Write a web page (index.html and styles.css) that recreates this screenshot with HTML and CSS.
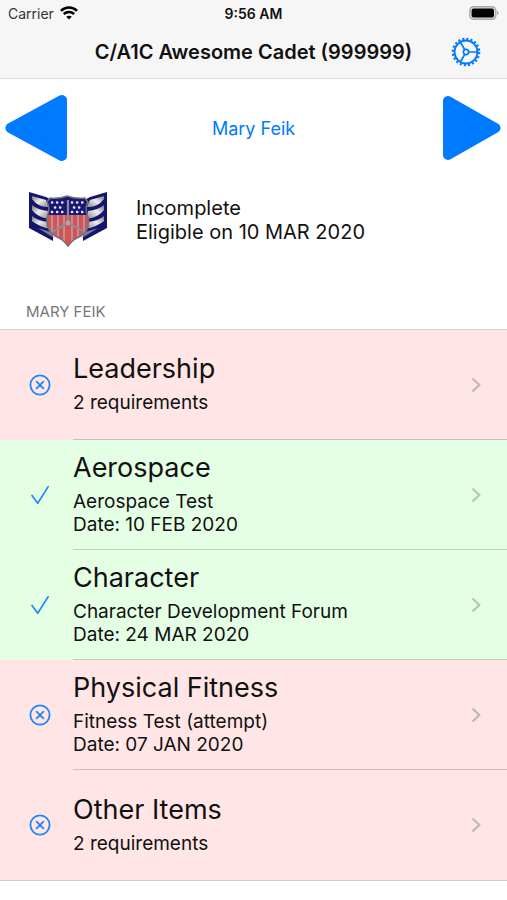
FILE: index.html
```html
<!DOCTYPE html>
<html lang="en">
<head>
<meta charset="utf-8">
<meta name="viewport" content="width=device-width, initial-scale=1">
<title>Cadet achievements</title>
<link rel="stylesheet" href="styles.css">
</head>
<body>
<svg class="defs" aria-hidden="true">
  <symbol id="cross" viewBox="0 0 22 22"><g fill="none" stroke="currentColor" stroke-width="1.8" stroke-linecap="round"><circle cx="11" cy="11" r="9.6"/><path d="M7.6 7.6l6.8 6.8M14.4 7.6l-6.8 6.8"/></g></symbol>
  <symbol id="check" viewBox="0 0 22 22"><path d="M3 11.5L8.700 19.200L19.200 2.600" fill="none" stroke="currentColor" stroke-width="1.700" stroke-linecap="round" stroke-linejoin="round"/></symbol>
  <symbol id="chevron" viewBox="0 0 10 16"><path d="M1.500 1.500L8.300 8L1.500 14.500" fill="none" stroke="currentColor" stroke-width="2.200"/></symbol>
</svg>

<header class="top">
  <div class="status">
    <div class="carrier">
      <span>Carrier</span>
      <svg class="wifi" viewBox="0 0 18 14" aria-hidden="true"><g fill="none" stroke="#000" stroke-width="2.500"><path d="M.9 4.800C5.500.300 12.500.300 17.100 4.800"/><path d="M3.800 8C6.800 5.200 11.200 5.200 14.200 8"/></g><path d="M9 13.600L6.200 10.700C7.800 9.300 10.200 9.300 11.800 10.700Z"/></svg>
    </div>
    <time class="clock">9:56 AM</time>
    <svg class="battery" viewBox="0 0 30 14" aria-hidden="true"><rect x=".8" y=".8" width="26" height="12.400" rx="3.600" fill="#ddd" stroke="#aaa" stroke-width="1.400"/><rect x="2.600" y="2.500" width="22.400" height="9" rx="2" fill="#000"/><path d="M28 5C30 5.500 30 8.500 28 9Z" fill="#aaa"/></svg>
  </div>
  <div class="nav">
    <h1 class="title">C/A1C Awesome Cadet (999999)</h1>
    <button class="settings" type="button" aria-label="Settings">
      <svg class="gear" viewBox="0 0 30 30" fill="none" stroke="currentColor" aria-hidden="true"><circle cx="15" cy="15" r="13.200" stroke-width="2.200" stroke-dasharray="2.073 2.073"/><circle cx="15" cy="15" r="11.500" stroke-width="1.900"/><circle cx="15" cy="15" r="2.600" stroke-width="1.600"/><path d="M17.600 15H26.500M13.700 12.700L9.300 5M13.700 17.300L9.300 25" stroke-width="1.700"/></svg>
    </button>
  </div>
</header>

<main>
  <nav class="pager">
    <button class="step" type="button" aria-label="Previous achievement"><svg class="triangle" viewBox="0 0 64 68" aria-hidden="true"><path d="M5.500 34L57 6V62Z" fill="currentColor" stroke="currentColor" stroke-width="10" stroke-linejoin="round"/></svg></button>
    <a class="current" href="#requirements">Mary Feik</a>
    <button class="step" type="button" aria-label="Next achievement"><svg class="triangle" viewBox="0 0 64 68" aria-hidden="true"><path d="M57.500 34L10 7V61Z" fill="currentColor" stroke="currentColor" stroke-width="10" stroke-linejoin="round"/></svg></button>
  </nav>

  <section class="summary">
    <svg class="badge" viewBox="0 0 80 58" role="img" aria-label="Mary Feik insignia">
      <defs>
        <linearGradient id="silver" x1="0" y1="0" x2="1" y2="1"><stop offset="0" stop-color="#777"/><stop offset=".45" stop-color="#eee"/><stop offset="1" stop-color="#888"/></linearGradient>
        <clipPath id="shield"><path d="M22 8Q31 9 39 6Q48 9 57 8L60 12Q57 17 59 24Q64 38 53 46Q45 49 40 57Q35 49 27 46Q16 38 20 24Q22 17 19 12Z"/></clipPath>
        <g id="wing"><path d="M1 2L18 7Q23 9 25 14V51L1 38Z" fill="#15156f"/><g fill="url(#silver)"><path d="M4 6L18 10L21 17Q11 18 4 9Z"/><path d="M4 15Q10 20 20 21L21 29Q9 27 4 20Z"/><path d="M4 26Q10 31 20 32L22 39Q10 36 4 31Z"/><path d="M10 38L23 42L26 48Z" fill="#777e96"/></g></g>
      </defs>
      <use href="#wing"/><use href="#wing" transform="translate(80 0) scale(-1 1)"/>
      <g clip-path="url(#shield)">
        <path fill="#d65254" d="M15 20H65V58H15Z"/>
        <path d="M24 24V49M30 24V51M36 24V55M44 24V55M50 24V51M56 24V49" stroke="#b5a3a3" stroke-width="1.600"/>
        <path fill="#191975" d="M17 4H63V25H17Z"/>
        <path d="M24 12.500H36M44 12.500H58M27 17.500H37M46 17.500H56M24 22H36M44 22H58" stroke="#e8e8f4" stroke-width="2.600" stroke-linecap="round" stroke-dasharray=".1 5"/>
        <path d="M40 10V33L24 42M40 33L57 42" fill="none" stroke="#918b91" stroke-width="2.200"/><circle cx="40" cy="33" r="2.400" fill="#aaa"/>
      </g>
      <path d="M22 8Q31 9 39 6Q48 9 57 8L60 12Q57 17 59 24Q64 38 53 46Q45 49 40 56Q35 49 27 46Q16 38 20 24Q22 17 19 12Z" fill="none" stroke="#77727c" stroke-width="1.500"/>
    </svg>
    <p class="state">Incomplete<br>Eligible on 10 MAR 2020</p>
  </section>

  <section id="requirements">
    <h2 class="section-title">MARY FEIK</h2>
    <ul class="list">
      <li class="item todo"><svg class="mark" role="img" aria-label="Not done"><use href="#cross"/></svg><a class="link" href="#leadership"><span class="text"><strong class="name">Leadership</strong><span class="detail">2 requirements</span></span><svg class="chevron" aria-hidden="true"><use href="#chevron"/></svg></a></li>
      <li class="item done"><svg class="mark" role="img" aria-label="Done"><use href="#check"/></svg><a class="link" href="#aerospace"><span class="text"><strong class="name">Aerospace</strong><span class="detail">Aerospace Test</span><span class="detail">Date: 10 FEB 2020</span></span><svg class="chevron" aria-hidden="true"><use href="#chevron"/></svg></a></li>
      <li class="item done"><svg class="mark" role="img" aria-label="Done"><use href="#check"/></svg><a class="link" href="#character"><span class="text"><strong class="name">Character</strong><span class="detail">Character Development Forum</span><span class="detail">Date: 24 MAR 2020</span></span><svg class="chevron" aria-hidden="true"><use href="#chevron"/></svg></a></li>
      <li class="item todo"><svg class="mark" role="img" aria-label="Not done"><use href="#cross"/></svg><a class="link" href="#fitness"><span class="text"><strong class="name">Physical Fitness</strong><span class="detail">Fitness Test (attempt)</span><span class="detail">Date: 07 JAN 2020</span></span><svg class="chevron" aria-hidden="true"><use href="#chevron"/></svg></a></li>
      <li class="item todo"><svg class="mark" role="img" aria-label="Not done"><use href="#cross"/></svg><a class="link" href="#other"><span class="text"><strong class="name">Other Items</strong><span class="detail">2 requirements</span></span><svg class="chevron" aria-hidden="true"><use href="#chevron"/></svg></a></li>
    </ul>
  </section>
</main>
</body>
</html>
```
FILE: styles.css
```css
* { box-sizing: border-box; }

body {
  margin: 0;
  background: #fff;
  color: #111;
  font-family: Inter, "Liberation Sans", sans-serif;
}

h1, h2, p, ul { margin: 0; padding: 0; }

button {
  padding: 0;
  border: 0;
  background: none;
  color: #007aff;
}

svg { display: block; flex: none; }

.defs { display: none; }

.top {
  background: #f7f6f7;
  border-bottom: 1px solid #dcdcdc;
}

.status {
  display: grid;
  grid-template-columns: 1fr auto 1fr;
  align-items: center;
  height: 26px;
  padding: 0 8px;
  font-size: 14px;
}

.carrier { display: flex; align-items: center; gap: 6px; color: #333; }
.wifi { width: 18px; height: 14px; }
.clock { font-weight: 600; }
.battery { width: 30px; height: 14px; justify-self: end; }

.nav {
  display: grid;
  grid-template-columns: 30px 1fr 30px;
  align-items: center;
  height: 52px;
  padding: 0 26px;
}

.title {
  grid-column: 2;
  font-size: 20px;
  font-weight: 600;
  line-height: 24px;
  text-align: center;
  white-space: nowrap;
}

.gear { width: 30px; height: 30px; }

.pager {
  display: flex;
  align-items: center;
  justify-content: space-between;
  padding: 15px 5px 14px;
}

.triangle { width: 64px; height: 68px; }
.current { color: #007aff; font-size: 18px; text-decoration: none; }

.summary {
  display: flex;
  align-items: center;
  gap: 28px;
  padding: 14px 28px;
}

.badge { width: 80px; height: 58px; }
.state { padding-top: 2px; font-size: 20px; line-height: 24px; }

.section-title {
  padding: 40px 26px 7px;
  color: #77777b;
  font-size: 15px;
  font-weight: 400;
  line-height: 20px;
}

.list {
  list-style: none;
  border-top: 1px solid #d5cccc;
  border-bottom: 1px solid #d5cccc;
}

.item { display: flex; align-items: center; gap: 22px; padding-left: 29px; }
.todo { background: #ffe5e5; }
.done { background: #e5ffe5; }
.mark { width: 22px; height: 22px; color: #2088f7; }

.link {
  display: flex;
  align-items: center;
  flex: 1;
  min-height: 110px;
  padding-right: 26px;
  border-bottom: 1px solid rgba(60, 60, 67, 0.24);
  color: inherit;
  text-decoration: none;
}

.item:last-child .link { border-bottom: 0; }
.text { display: flex; flex: 1; flex-direction: column; padding-bottom: 3px; }
.name { margin-bottom: 5px; font-size: 27px; font-weight: 400; line-height: 34px; }
.detail { font-size: 19px; line-height: 23px; }
.chevron { width: 10px; height: 16px; color: #bfb8b8; }
.done .chevron { color: #b4c6b4; }
```
